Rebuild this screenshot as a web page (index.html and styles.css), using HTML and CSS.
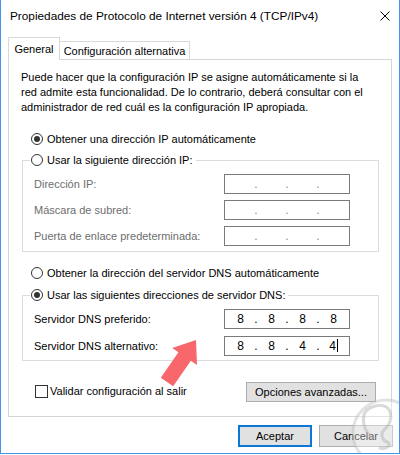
FILE: index.html
```html
<!DOCTYPE html>
<html lang="es">
<head>
    <meta charset="UTF-8">
    <meta name="viewport" content="width=device-width, initial-scale=1.0">
    <title>Propiedades de Protocolo de Internet versión 4 (TCP/IPv4)</title>
    <link rel="stylesheet" href="styles.css">
</head>
<body>
    <div class="window">
        <div class="titlebar">
            <span class="title">Propiedades de Protocolo de Internet versión 4 (TCP/IPv4)</span>
            <svg class="close" width="10" height="10" viewBox="0 0 10 10">
                <path d="M0.5 0.5 L9.5 9.5 M9.5 0.5 L0.5 9.5" stroke="#000" stroke-width="1" fill="none"/>
            </svg>
        </div>

        <div class="tabs">
            <div class="tab active">General</div>
            <div class="tab second">Configuración alternativa</div>
        </div>

        <div class="panel">
            <p class="intro">Puede hacer que la configuración IP se asigne automáticamente si la<br>red admite esta funcionalidad. De lo contrario, deberá consultar con el<br>administrador de red cuál es la configuración IP apropiada.</p>

            <div class="radio on first"><span class="dot"></span>Obtener una dirección IP automáticamente</div>

            <fieldset class="group ip-group">
                <legend><span class="radio"><span class="dot"></span>Usar la siguiente dirección IP:</span></legend>
                <div class="row disabled">
                    <span>Dirección IP:</span>
                    <div class="ip"><span class="oct"></span><span class="sep">.</span><span class="oct"></span><span class="sep">.</span><span class="oct"></span><span class="sep">.</span><span class="oct"></span></div>
                </div>
                <div class="row disabled">
                    <span>Máscara de subred:</span>
                    <div class="ip"><span class="oct"></span><span class="sep">.</span><span class="oct"></span><span class="sep">.</span><span class="oct"></span><span class="sep">.</span><span class="oct"></span></div>
                </div>
                <div class="row disabled">
                    <span>Puerta de enlace predeterminada:</span>
                    <div class="ip"><span class="oct"></span><span class="sep">.</span><span class="oct"></span><span class="sep">.</span><span class="oct"></span><span class="sep">.</span><span class="oct"></span></div>
                </div>
            </fieldset>

            <div class="radio dns-auto"><span class="dot"></span>Obtener la dirección del servidor DNS automáticamente</div>

            <fieldset class="group dns-group">
                <legend><span class="radio on"><span class="dot"></span>Usar las siguientes direcciones de servidor DNS:</span></legend>
                <div class="row">
                    <span>Servidor DNS preferido:</span>
                    <div class="ip"><span class="oct">8</span><span class="sep">.</span><span class="oct">8</span><span class="sep">.</span><span class="oct">8</span><span class="sep">.</span><span class="oct">8</span></div>
                </div>
                <div class="row second-row">
                    <span>Servidor DNS alternativo:</span>
                    <div class="ip"><span class="oct">8</span><span class="sep">.</span><span class="oct">8</span><span class="sep">.</span><span class="oct">4</span><span class="sep">.</span><span class="oct">4<span class="caret"></span></span></div>
                </div>
            </fieldset>

            <div class="bottom-row">
                <div class="check"><span class="box"></span>Validar configuración al salir</div>
                <button class="btn advanced">Opciones avanzadas...</button>
            </div>
        </div>

        <div class="footer">
            <button class="btn default">Aceptar</button>
            <button class="btn">Cancelar</button>
        </div>

        <!-- annotation arrow and site watermark drawn over the dialog -->
        <svg class="overlay" width="400" height="455" viewBox="0 0 400 455">
            <path d="M160.8 377.7 L178.4 352.2 L172.2 348 L196 340 L197 365 L190.8 360.8 L173.2 386.3 Z" fill="#f7676b"/>
            <circle cx="386" cy="433" r="33" fill="rgba(255,255,255,0.35)" stroke="rgba(190,190,190,0.45)" stroke-width="3"/>
            <path d="M372 438 C362 428 358 410 375 406 C392 402 396 420 384 430 C380 434 382 440 387 442 C392 444 388 450 380 448" fill="none" stroke="rgba(180,180,180,0.5)" stroke-width="3" stroke-linecap="round"/>
        </svg>
    </div>
</body>
</html>
```

FILE: styles.css
```css
* {
    box-sizing: border-box;
}
body {
    margin: 0;
    background-color: #fff;
    font-family: "Liberation Sans", Arial, sans-serif;
    font-size: 11px;
    color: #000;
}
.window {
    position: relative;
    width: 400px;
    height: 454px;
    border: 1px solid #4495e6;
    border-top: none;
    display: flex;
    flex-direction: column;
    overflow: hidden;
}
.titlebar {
    height: 30px;
    display: flex;
    align-items: center;
    justify-content: space-between;
    padding: 1px 9px 0 9px;
    font-size: 11.8px;
}
.tabs {
    display: flex;
    align-items: flex-end;
    height: 22px;
    margin: 7px 0 0 7px;
}
.tab {
    display: flex;
    align-items: center;
    justify-content: center;
    border: 1px solid #d9d9d9;
    border-bottom: none;
    background-color: #fff;
}
.tab.active {
    position: relative;
    z-index: 1;
    width: 52px;
    height: 23px;
    margin-bottom: -1px;
}
.tab.second {
    width: 130px;
    height: 18px;
    border-left: none;
}
.panel {
    width: 384px;
    height: 358px;
    margin-left: 7px;
    border: 1px solid #d5d5d5;
    display: flex;
    flex-direction: column;
}
.intro {
    margin: 10px 0 0 12px;
    line-height: 15px;
    white-space: nowrap;
}
.radio {
    display: flex;
    align-items: center;
    gap: 4px;
    height: 16px;
    white-space: nowrap;
}
.radio .dot {
    width: 12px;
    height: 12px;
    border: 1px solid #333;
    border-radius: 50%;
    display: flex;
    align-items: center;
    justify-content: center;
    flex-shrink: 0;
}
.radio.on .dot::after {
    content: "";
    width: 6px;
    height: 6px;
    border-radius: 50%;
    background-color: #333;
}
.radio.first {
    margin: 16px 0 0 22px;
}
.radio.dns-auto {
    margin: 13px 0 0 22px;
}
.group {
    margin: 5px 12px 0 13px;
    padding: 0 0 5px 0;
    min-width: 0;
    border: 1px solid #dcdcdc;
}
.group legend {
    margin-left: 7px;
    padding: 0 3px 0 1px;
}
.dns-group {
    margin-top: 6px;
    padding-bottom: 4px;
}
.row {
    display: grid;
    grid-template-columns: 190px 126px;
    align-items: center;
    height: 20px;
    margin-top: 6px;
    padding-left: 11px;
}
.row.second-row {
    margin-top: 7px;
}
.row.disabled {
    color: #6d6d6d;
}
.ip {
    display: flex;
    height: 20px;
    padding-left: 5px;
    border: 1px solid #7a7a7a;
    font-size: 12px;
    line-height: 18px;
}
.ip .oct {
    width: 21px;
    text-align: center;
}
.ip .sep {
    width: 10px;
    text-align: center;
}
.row.disabled .sep {
    color: #8a8a8a;
}
.caret {
    display: inline-block;
    width: 1px;
    height: 13px;
    margin-left: 1px;
    vertical-align: -2px;
    background-color: #000;
}
.bottom-row {
    display: flex;
    align-items: center;
    justify-content: space-between;
    margin-top: 21px;
    padding: 0 15px 0 26px;
}
.check {
    display: flex;
    align-items: center;
    gap: 2px;
    margin-top: -2px;
}
.check .box {
    width: 13px;
    height: 13px;
    border: 1px solid #333;
}
.btn {
    font-family: inherit;
    font-size: 11px;
    color: #000;
    background-color: #e1e1e1;
    border: 1px solid #adadad;
    padding: 0;
}
.btn.advanced {
    width: 130px;
    height: 20px;
}
.footer {
    display: flex;
    justify-content: flex-end;
    gap: 7px;
    margin-top: 8px;
    padding-right: 6px;
}
.footer .btn {
    width: 74px;
    height: 22px;
}
.btn.default {
    border: 2px solid #0a78d7;
}
.overlay {
    position: absolute;
    top: 0;
    left: -1px;
    pointer-events: none;
}
```
